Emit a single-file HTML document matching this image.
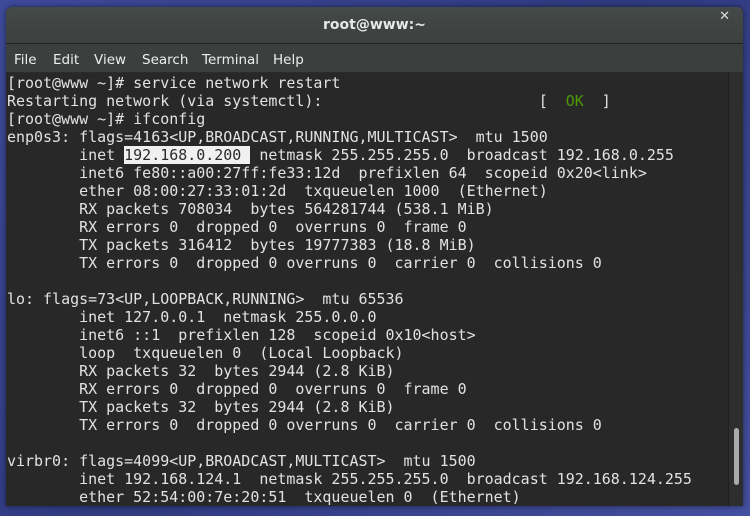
<!DOCTYPE html>
<html><head><meta charset="utf-8"><style>
html,body{margin:0;padding:0;width:750px;height:516px;overflow:hidden;background:#3b4690;}
.bg{position:absolute;inset:0;background:linear-gradient(135deg,#3e4a9a,#2f3a80 50%,#4450a0);}
.win{position:absolute;left:6px;top:7px;width:737px;height:499px;background:#272827;border-radius:6px 6px 0 0;overflow:hidden;box-shadow:0 0 6px rgba(0,0,0,.5);}
.title{position:absolute;left:0;top:0;width:737px;height:36px;background:linear-gradient(#444a48,#3c403f);border-bottom:1px solid #222;font:bold 14px "DejaVu Sans","Liberation Sans",sans-serif;color:#e8e8e8;text-align:center;line-height:36px;}
.x{position:absolute;right:13px;top:2px;font:bold 13px "DejaVu Sans",sans-serif;color:#ddd;}
.menu{position:absolute;left:0;top:37px;width:737px;height:28px;background:#3b3f3e;border-bottom:1px solid #2a2c2b;font:13.5px "DejaVu Sans","Liberation Sans",sans-serif;color:#eee;line-height:32px;}
.menu span{position:absolute;}
pre{position:absolute;left:1px;top:67px;margin:0;font:14.97px/18px "DejaVu Sans Mono","Liberation Mono",monospace;color:#e2e2e2;}
.hl{background:#f0f0f0;color:#2a2a2a;}
.ok{color:#4e9a06;}
.sb{position:absolute;left:722px;top:65px;width:15px;height:434px;background:#2d2e2d;border-left:1px solid #1e1f1e;}
.th{position:absolute;left:5px;top:356px;width:5px;height:57px;border-radius:3px;background:#a9aaa9;}
</style></head><body><div class="bg"></div>
<div class="win">
<div class="title">root@www:~<span class="x">✕</span></div>
<div class="menu"><span style="left:8px">File</span><span style="left:47px">Edit</span><span style="left:88px">View</span><span style="left:136px">Search</span><span style="left:196px">Terminal</span><span style="left:267px">Help</span></div>
<pre>[root@www ~]# service network restart
Restarting network (via systemctl):                        [  <span class="ok">OK</span>  ]
[root@www ~]# ifconfig
enp0s3: flags=4163&lt;UP,BROADCAST,RUNNING,MULTICAST&gt;  mtu 1500
        inet <span class="hl">192.168.0.200 </span> netmask 255.255.255.0  broadcast 192.168.0.255
        inet6 fe80::a00:27ff:fe33:12d  prefixlen 64  scopeid 0x20&lt;link&gt;
        ether 08:00:27:33:01:2d  txqueuelen 1000  (Ethernet)
        RX packets 708034  bytes 564281744 (538.1 MiB)
        RX errors 0  dropped 0  overruns 0  frame 0
        TX packets 316412  bytes 19777383 (18.8 MiB)
        TX errors 0  dropped 0 overruns 0  carrier 0  collisions 0

lo: flags=73&lt;UP,LOOPBACK,RUNNING&gt;  mtu 65536
        inet 127.0.0.1  netmask 255.0.0.0
        inet6 ::1  prefixlen 128  scopeid 0x10&lt;host&gt;
        loop  txqueuelen 0  (Local Loopback)
        RX packets 32  bytes 2944 (2.8 KiB)
        RX errors 0  dropped 0  overruns 0  frame 0
        TX packets 32  bytes 2944 (2.8 KiB)
        TX errors 0  dropped 0 overruns 0  carrier 0  collisions 0

virbr0: flags=4099&lt;UP,BROADCAST,MULTICAST&gt;  mtu 1500
        inet 192.168.124.1  netmask 255.255.255.0  broadcast 192.168.124.255
        ether 52:54:00:7e:20:51  txqueuelen 0  (Ethernet)</pre>
<div class="sb"><div class="th"></div></div>
</div>
</body></html>
